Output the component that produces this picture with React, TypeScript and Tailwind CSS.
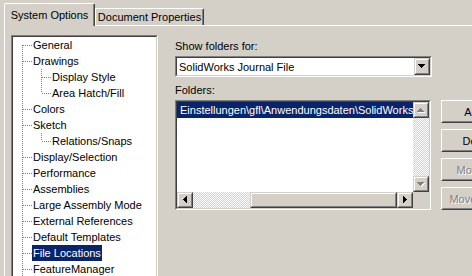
import React from 'react';

type TreeItem = { label: string; level: 1 | 2; last?: boolean; selected?: boolean };

const treeItems: TreeItem[] = [
  { label: 'General', level: 1 },
  { label: 'Drawings', level: 1 },
  { label: 'Display Style', level: 2 },
  { label: 'Area Hatch/Fill', level: 2, last: true },
  { label: 'Colors', level: 1 },
  { label: 'Sketch', level: 1 },
  { label: 'Relations/Snaps', level: 2, last: true },
  { label: 'Display/Selection', level: 1 },
  { label: 'Performance', level: 1 },
  { label: 'Assemblies', level: 1 },
  { label: 'Large Assembly Mode', level: 1 },
  { label: 'External References', level: 1 },
  { label: 'Default Templates', level: 1 },
  { label: 'File Locations', level: 1, selected: true },
  { label: 'FeatureManager', level: 1 },
];

const bevels = {
  sunkenOuter: 'border border-t-[#808080] border-l-[#808080] border-r-white border-b-white',
  sunkenInner: 'border border-t-[#404040] border-l-[#404040] border-r-[#d4d0c8] border-b-[#d4d0c8]',
  buttonOuter: 'border border-t-white border-l-white border-r-[#404040] border-b-[#404040]',
  buttonInner: 'border border-t-[#d4d0c8] border-l-[#d4d0c8] border-r-[#808080] border-b-[#808080]',
  scrollOuter: 'border border-t-[#d4d0c8] border-l-[#d4d0c8] border-r-[#404040] border-b-[#404040]',
  scrollInner: 'border border-t-white border-l-white border-r-[#808080] border-b-[#808080]',
};

const checker =
  'bg-[repeating-conic-gradient(#ffffff_0%_25%,#d4d0c8_0%_50%)] bg-[length:2px_2px]';

const Sunken: React.FC<{ className?: string; children?: React.ReactNode }> = ({ className = '', children }) => (
  <div className={`${bevels.sunkenOuter} ${className}`}>
    <div className={`${bevels.sunkenInner} h-full w-full overflow-hidden bg-white`}>{children}</div>
  </div>
);

const ScrollBox: React.FC<{ className?: string; children?: React.ReactNode }> = ({ className = '', children }) => (
  <div className={`${bevels.scrollOuter} shrink-0 bg-[#d4d0c8] ${className}`}>
    <div className={`${bevels.scrollInner} flex h-full w-full items-center justify-center`}>{children}</div>
  </div>
);

// small pixel triangles used on scroll / combo buttons
const Arrow: React.FC<{ dir: 'up' | 'down' | 'left' | 'right'; disabled?: boolean }> = ({ dir, disabled }) => {
  const vertical = dir === 'up' || dir === 'down';
  const rows = vertical
    ? dir === 'down'
      ? [[0, 0, 7, 1], [1, 1, 5, 1], [2, 2, 3, 1], [3, 3, 1, 1]]
      : [[3, 0, 1, 1], [2, 1, 3, 1], [1, 2, 5, 1], [0, 3, 7, 1]]
    : dir === 'right'
      ? [[0, 0, 1, 7], [1, 1, 1, 5], [2, 2, 1, 3], [3, 3, 1, 1]]
      : [[3, 0, 1, 7], [2, 1, 1, 5], [1, 2, 1, 3], [0, 3, 1, 1]];
  const w = vertical ? 8 : 5;
  const h = vertical ? 5 : 8;
  return (
    <svg width={w} height={h} shapeRendering="crispEdges">
      {disabled &&
        rows.map(([x, y, rw, rh], i) => <rect key={`s${i}`} x={x + 1} y={y + 1} width={rw} height={rh} fill="#ffffff" />)}
      {rows.map(([x, y, rw, rh], i) => (
        <rect key={i} x={x} y={y} width={rw} height={rh} fill={disabled ? '#808080' : '#000000'} />
      ))}
    </svg>
  );
};

const Connector: React.FC<{ top?: boolean; bottom?: boolean; branch?: boolean }> = ({ top = true, bottom = true, branch = true }) => (
  <svg width={19} height={16} className="shrink-0" shapeRendering="crispEdges">
    {(top || bottom) && (
      <line x1={9.5} x2={9.5} y1={top ? 0 : 8} y2={bottom ? 16 : 8} stroke="#808080" strokeDasharray="1 1" />
    )}
    {branch && <line x1={10} x2={19} y1={8.5} y2={8.5} stroke="#808080" strokeDasharray="1 1" />}
  </svg>
);

const TreeRow: React.FC<{ item: TreeItem; first: boolean }> = ({ item, first }) => (
  <div className="flex h-[16px] items-center whitespace-nowrap">
    {item.level === 1 ? (
      <Connector top={!first} />
    ) : (
      <>
        <Connector branch={false} />
        <Connector bottom={!item.last} />
      </>
    )}
    <span className={`h-[16px] px-px leading-[16px] ${item.selected ? 'bg-[#0a246a] text-white' : ''}`}>{item.label}</span>
  </div>
);

const WinButton: React.FC<{ label: string; disabled?: boolean }> = ({ label, disabled }) => (
  <div className={`${bevels.buttonOuter} h-[23px] w-[75px] shrink-0`}>
    <div
      className={`${bevels.buttonInner} flex h-full w-full items-center justify-center whitespace-nowrap ${
        disabled ? 'text-[#808080] [text-shadow:1px_1px_0_#ffffff]' : ''
      }`}
    >
      {label}
    </div>
  </div>
);

export default function App() {
  return (
    <div className="h-[276px] w-[472px] overflow-hidden bg-[#d4d0c8] font-['Liberation_Sans',Arial,sans-serif] text-[11px] leading-[14px] text-black">
      {/* tabs */}
      <div className="flex items-end pl-[4px] pt-[3px]">
        <div className="relative z-10 -mb-px flex h-[23px] w-[91px] shrink-0 items-center justify-center rounded-t-[2px] border-t border-l border-r border-t-white border-l-white border-r-[#404040] bg-[#d4d0c8] shadow-[inset_-1px_0_0_#808080]">
          System Options
        </div>
        <div className="flex h-[17px] w-[109px] shrink-0 items-center justify-center rounded-tr-[2px] border-t border-l border-r border-t-white border-l-white border-r-[#404040] shadow-[inset_-1px_0_0_#808080]">
          Document Properties
        </div>
      </div>

      {/* panel */}
      <div className="ml-[4px] flex items-start border-t border-l border-t-white border-l-white pl-[6px] pt-[9px]">
        <Sunken className="h-[260px] w-[147px] shrink-0">
          <div className="flex flex-col">
            {treeItems.map((item, i) => (
              <TreeRow key={item.label} item={item} first={i === 0} />
            ))}
          </div>
        </Sunken>

        <div className="ml-[17px] flex shrink-0 flex-col pt-[4px]">
          <div>Show folders for:</div>
          <Sunken className="mt-[3px] h-[21px] w-[257px]">
            <div className="flex h-full items-center bg-white">
              <div className="flex-1 whitespace-nowrap pl-[2px]">SolidWorks Journal File</div>
              <ScrollBox className="h-[17px] w-[16px]">
                <Arrow dir="down" />
              </ScrollBox>
            </div>
          </Sunken>

          <div className="mt-[6px]">Folders:</div>
          <div className="mt-[3px] flex items-start gap-[10px]">
            <Sunken className="h-[110px] w-[256px] shrink-0">
              <div className="grid h-full grid-cols-[1fr_16px] grid-rows-[1fr_16px]">
                <div className="overflow-hidden">
                  <div className="h-[16px] overflow-hidden whitespace-nowrap bg-[#0a246a] pl-[3px] leading-[16px] text-white">
                    Einstellungen\gfl\Anwendungsdaten\SolidWorks
                  </div>
                </div>
                <div className="flex flex-col">
                  <ScrollBox className="h-[16px] w-[16px]">
                    <Arrow dir="up" disabled />
                  </ScrollBox>
                  <div className={`flex-1 ${checker}`} />
                  <ScrollBox className="h-[16px] w-[16px]">
                    <Arrow dir="down" disabled />
                  </ScrollBox>
                </div>
                <div className="flex">
                  <ScrollBox className="h-[16px] w-[16px]">
                    <Arrow dir="left" />
                  </ScrollBox>
                  <div className={`h-[16px] w-[57px] shrink-0 ${checker}`} />
                  <ScrollBox className="h-[16px] flex-1" />
                  <ScrollBox className="h-[16px] w-[16px]">
                    <Arrow dir="right" />
                  </ScrollBox>
                </div>
                <div className="bg-[#d4d0c8]" />
              </div>
            </Sunken>

            <div className="flex shrink-0 flex-col gap-[6px]">
              <WinButton label="Add..." />
              <WinButton label="Delete" />
              <WinButton label="Move Up" disabled />
              <WinButton label="Move Down" disabled />
            </div>
          </div>
        </div>
      </div>
    </div>
  );
}
